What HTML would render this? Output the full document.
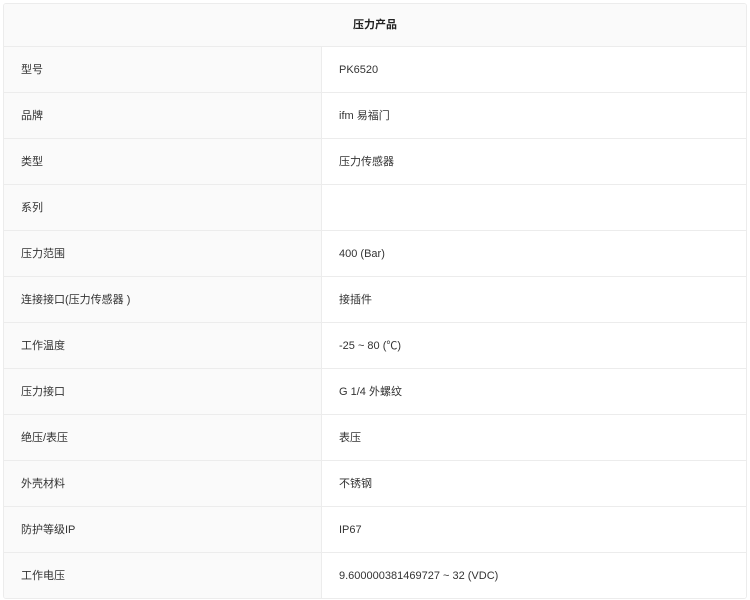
<!DOCTYPE html>
<html><head><meta charset="utf-8"><style>
body{margin:0;background:#fff;font-family:"Liberation Sans","Noto Sans CJK SC",sans-serif;font-size:11px;color:#333}
.t{position:absolute;left:3px;top:3px;width:742px;border:1px solid #ececec;border-radius:3px;overflow:hidden}
.h{height:42px;line-height:42px;text-align:center;font-weight:bold;background:#fafafa;border-bottom:1px solid #ececec;color:#222}
.r{display:flex;height:45px;border-bottom:1px solid #ececec}
.r:last-child{border-bottom:none}
.l{width:300px;padding-left:17px;background:#fafafa;line-height:46px;border-right:1px solid #ececec}
.v{flex:1;padding-left:17px;line-height:46px;background:#fff}
</style></head><body>
<div class="t">
<div class="h">压力产品</div>
<div class="r"><div class="l">型号</div><div class="v">PK6520</div></div>
<div class="r"><div class="l">品牌</div><div class="v">ifm 易福门</div></div>
<div class="r"><div class="l">类型</div><div class="v">压力传感器</div></div>
<div class="r"><div class="l">系列</div><div class="v"></div></div>
<div class="r"><div class="l">压力范围</div><div class="v">400 (Bar)</div></div>
<div class="r"><div class="l">连接接口(压力传感器 )</div><div class="v">接插件</div></div>
<div class="r"><div class="l">工作温度</div><div class="v">-25 ~ 80 (℃)</div></div>
<div class="r"><div class="l">压力接口</div><div class="v">G 1/4 外螺纹</div></div>
<div class="r"><div class="l">绝压/表压</div><div class="v">表压</div></div>
<div class="r"><div class="l">外壳材料</div><div class="v">不锈钢</div></div>
<div class="r"><div class="l">防护等级IP</div><div class="v">IP67</div></div>
<div class="r"><div class="l">工作电压</div><div class="v">9.600000381469727 ~ 32 (VDC)</div></div>
</div>
</body></html>
